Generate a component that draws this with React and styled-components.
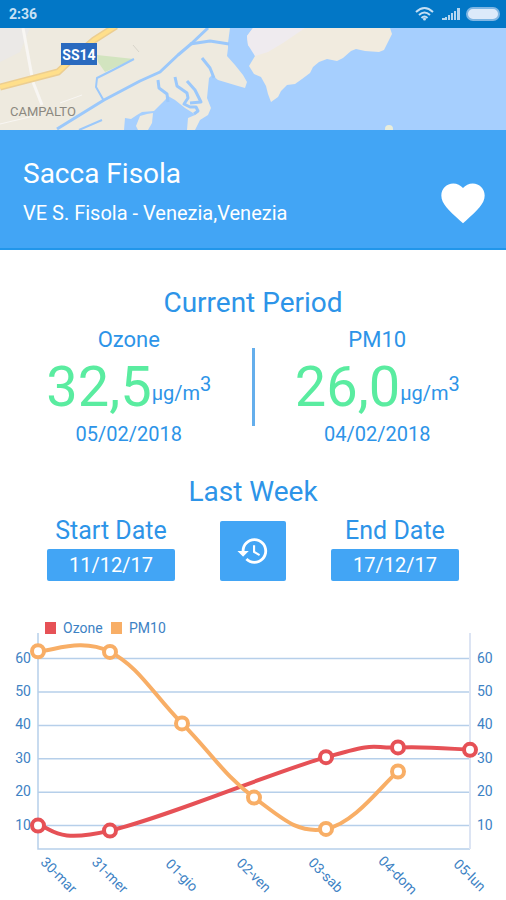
import React from "react";
import styled, { createGlobalStyle } from "styled-components";

const ozone = { name: "Ozone", value: "32,5", date: "05/02/2018" };
const pm10 = { name: "PM10", value: "26,0", date: "04/02/2018" };

const days = ["30-mar", "31-mer", "01-gio", "02-ven", "03-sab", "04-dom", "05-lun"];

const ticks = [60, 50, 40, 30, 20, 10];

const series = [
  {
    name: "Ozone",
    color: "#e65156",
    legendX: 45,
    points: [[0, 10], [1, 8.5], [4, 30.5], [5, 33.4], [6, 32.7]],
  },
  {
    name: "PM10",
    color: "#f8ae66",
    legendX: 111,
    points: [[0, 62.2], [1, 62], [2, 40.6], [3, 18.4], [4, 9], [5, 26.2]],
  },
];

const LEFT = 38;
const RIGHT = 470;
const BASE = 234;

const toX = (day) => LEFT + day * 72;
const toY = (value) => 244 - value * 3.34;

// cubic line where every control point follows its neighbours
const linePath = (points) => {
  const p = points.map(([day, value]) => [toX(day), toY(value)]);
  let d = `M${p[0][0]} ${p[0][1]}`;
  for (let i = 1; i < p.length; i++) {
    const before = p[Math.max(i - 2, 0)];
    const prev = p[i - 1];
    const cur = p[i];
    const next = p[Math.min(i + 1, p.length - 1)];
    const c1 = [0, 1].map((k) => prev[k] + (cur[k] - before[k]) * 0.2);
    const c2 = [0, 1].map((k) => cur[k] - (next[k] - prev[k]) * 0.2);
    d += ` C${c1.join(" ")} ${c2.join(" ")} ${cur.join(" ")}`;
  }
  return d;
};

const MapView = () => (
  <MapSvg viewBox="0 0 506 102" preserveAspectRatio="xMidYMid slice" role="img" aria-label="Map">
    <rect width="506" height="102" fill="#a6cffe" />
    <path
      fill="#eeeadf"
      d="M0 0H230L228 15V20L227 28L235 37L243 47L247 54L245 60L238 58L228 55L218 52L212 47L209 50L208 60L207 70L211 80L208 87L200 92L195 102H187L188 90L195 87L193 85L185 80L175 72L168 68L165 72L162 75L154 83L142 84L137 87L131 91L125 90L124 102H0Z"
    />
    <path fill="#eeeadf" d="M140 88L147 86L153 85L152 95L148 102H138L136 98L138 93Z" />
    <path
      fill="#f1ebdf"
      d="M253 0H390L392 6L388 14L384 22L379 24L365 23L356 21L351 23L343 30L337 33L327 31L319 34L313 39L310 45L302 51L295 56L287 57L281 63L278 69L271 74L268 66L266 58L261 49L254 46L249 38L255 28L253 22L248 17L247 8Z"
    />
    <path fill="#efebef" d="M253 0H305L283 15L268 24L255 28L248 17L247 8Z" />
    <path fill="#ebe9e7" d="M0 0H30L20 24L0 34Z" />
    <path fill="#d2e4bf" d="M97 27L134 31L105 44L98 34Z" />
    <g fill="none" stroke="#9bc8fb" strokeLinejoin="round">
      <path strokeWidth="3" d="M208 0L191 16L178 27L160 44L140 53L104 72L57 101" />
      <path strokeWidth="3" d="M190 16L210 13L229 16" />
      <path strokeWidth="2" d="M134 31L113 42L97 50L96 59L104 73M79 102L102 92" />
      <path strokeWidth="3" d="M158 52L159 60L167 66L168 74M202 30L210 40L214 50" />
      <path strokeWidth="3" d="M175 49L177 58L187 65L188 70L184 76L190 79H196L198 83L194 86M187 53L195 62L201 74L190 75" />
    </g>
    <path fill="none" stroke="#f8f6f3" strokeWidth="3" d="M23 0L33 54L42 77" />
    <path fill="none" stroke="#f8f6f3" strokeWidth="1" d="M0 96L38 87M60 75L82 67" />
    <path fill="none" stroke="#ecce91" strokeWidth="7" d="M0 59L58 44L72 31L94 12L116 -2" />
    <path fill="none" stroke="#ffdf8b" strokeWidth="4" d="M0 59L58 44L72 31L94 12L116 -2" />
    <path fill="none" stroke="#d7d4ca" strokeWidth="1" d="M133 17L139 24" />
    <circle cx="389" cy="101" r="4" fill="#e9edda" />
    <rect x="61" y="15" width="36" height="22" fill="#2a6abf" />
    <SignText x="79" y="32">SS14</SignText>
    <PlaceText x="10" y="88">CAMPALTO</PlaceText>
  </MapSvg>
);

const PeriodReading = ({ period }) => (
  <Period>
    <PeriodName>{period.name}</PeriodName>
    <Reading>
      <Value>{period.value}</Value>
      <Unit>
        µg/m<Cube>3</Cube>
      </Unit>
    </Reading>
    <PeriodDate>{period.date}</PeriodDate>
  </Period>
);

const Chart = () => (
  <ChartSvg viewBox="0 0 506 285" role="img" aria-label="Ozone and PM10, last week">
    {ticks.map((tick) => (
      <g key={tick}>
        <line x1={LEFT} x2={RIGHT} y1={toY(tick)} y2={toY(tick)} stroke="#b6cfea" strokeWidth="1.5" />
        <ChartText x="31" y={toY(tick) + 4} textAnchor="end">{tick}</ChartText>
        <ChartText x="477" y={toY(tick) + 4}>{tick}</ChartText>
      </g>
    ))}
    <path d={`M${LEFT} 18V${BASE}H${RIGHT}`} fill="none" stroke="#b6cfea" strokeWidth="1.5" />
    <path d={`M${RIGHT} 18V${BASE}`} stroke="#dce4f3" strokeWidth="2" />
    {series.map(({ name, color, legendX, points }) => (
      <g key={name}>
        <rect x={legendX} y="7" width="11" height="12" fill={color} />
        <ChartText x={legendX + 18} y="18">{name}</ChartText>
        <path d={linePath(points)} fill="none" stroke={color} strokeWidth="4" />
        {points.map(([day, value]) => (
          <circle key={day} cx={toX(day)} cy={toY(value)} r="6" fill="#fff" stroke={color} strokeWidth="4" />
        ))}
      </g>
    ))}
    {days.map((day, i) => (
      <g key={day} transform={`translate(${i === 0 ? 59 : toX(i)} 260) rotate(45)`}>
        <ChartText y="5" textAnchor="middle">{day}</ChartText>
      </g>
    ))}
  </ChartSvg>
);

const App = () => {
  return (
    <Wrapper>
      <GlobalStyle />
      <StatusBar>
        <Clock>2:36</Clock>
        <StatusIcons width="86" height="16" viewBox="0 0 86 16" aria-hidden="true">
          <g fill="none" stroke="#c4dff4" strokeWidth="2">
            <path d="M1 6Q9.5 -2 18 6" />
            <path d="M4 9Q9.5 4 15 9" />
            <path d="M6.5 12Q9.5 9 12.5 12" />
          </g>
          <circle cx="9.5" cy="13" r="1.5" fill="#c4dff4" />
          <path fill="#b4d6f0" d="M27 12h3v2h-3zM30 11h2v3h-2zM33 9h2v5h-2zM36 7h2v7h-2zM39 5h2v9h-2zM42 2h3v12h-3z" />
          <rect x="52" y="2" width="32" height="12" rx="6" fill="#dceafa" stroke="#7fb6e3" strokeWidth="2" />
        </StatusIcons>
      </StatusBar>
      <MapView />
      <Header>
        <div>
          <StationName>Sacca Fisola</StationName>
          <StationPlace>VE S. Fisola - Venezia,Venezia</StationPlace>
        </div>
        <HeartButton aria-label="Favourite">
          <svg width="52" height="52" viewBox="0 0 24 24" fill="#fff">
            <path d="M12 21.35l-1.45-1.32C5.4 15.36 2 12.28 2 8.5 2 5.42 4.42 3 7.5 3c1.74 0 3.41.81 4.5 2.09C13.09 3.81 14.76 3 16.5 3 19.58 3 22 5.42 22 8.5c0 3.78-3.4 6.86-8.55 11.54L12 21.35z" />
          </svg>
        </HeartButton>
      </Header>

      <Main>
        <SectionTitle>Current Period</SectionTitle>
        <PeriodRow>
          <PeriodReading period={ozone} />
          <Divider />
          <PeriodReading period={pm10} />
        </PeriodRow>

        <SectionTitle>Last Week</SectionTitle>
        <DateRow>
          <DateField>
            <DateLabel id="start-label">Start Date</DateLabel>
            <DateButton aria-labelledby="start-label start-date" id="start-date">11/12/17</DateButton>
          </DateField>
          <HistoryButton aria-label="Load history">
            <svg width="34" height="34" viewBox="0 0 24 24" fill="#fff">
              <path d="M13 3c-4.97 0-9 4.03-9 9H1l3.89 3.89.07.14L9 12H6c0-3.87 3.13-7 7-7s7 3.13 7 7-3.13 7-7 7c-1.93 0-3.68-.79-4.94-2.06l-1.42 1.42C8.27 19.99 10.51 21 13 21c4.97 0 9-4.03 9-9s-4.03-9-9-9zm-1 5v5l4.28 2.54.72-1.21-3.5-2.08V8H12z" />
            </svg>
          </HistoryButton>
          <DateField>
            <DateLabel id="end-label">End Date</DateLabel>
            <DateButton aria-labelledby="end-label end-date" id="end-date">17/12/17</DateButton>
          </DateField>
        </DateRow>
        <Chart />
      </Main>
    </Wrapper>
  );
};

export default App;

const GlobalStyle = createGlobalStyle`
  * {
    box-sizing: border-box;
  }
  body {
    margin: 0;
    background: #fff;
  }
  button {
    font-family: inherit;
    border: none;
    padding: 0;
    cursor: pointer;
  }
`;

const Wrapper = styled.div`
  font-family: Roboto, sans-serif;
  color: #2d94e8;
`;

// Top of the screen
const StatusBar = styled.div`
  display: flex;
  justify-content: space-between;
  align-items: center;
  height: 28px;
  padding: 0 5px 0 9px;
  background: #0277c6;
`;

const Clock = styled.span`
  font-size: 14px;
  font-weight: 700;
  color: #c8e2f5;
`;

const StatusIcons = styled.svg`
  display: block;
`;

const MapSvg = styled.svg`
  display: block;
  width: 100%;
  height: 102px;
`;

const SignText = styled.text`
  font-size: 14px;
  font-weight: 700;
  fill: #fff;
  text-anchor: middle;
`;

const PlaceText = styled.text`
  font-size: 13px;
  fill: #8b8880;
`;

const Header = styled.header`
  display: flex;
  justify-content: space-between;
  align-items: flex-end;
  padding: 28px 17px 19px 23px;
  background: #42a5f5;
  border-bottom: 2px solid #2196ea;
  color: #fff;
`;

const StationName = styled.h1`
  margin: 0 0 11px;
  font-size: 28px;
  font-weight: 400;
  line-height: 32px;
`;

const StationPlace = styled.p`
  margin: 0 0 4px;
  font-size: 20px;
  line-height: 24px;
`;

const HeartButton = styled.button`
  background: none;

  svg {
    display: block;
  }
`;

// Readings
const Main = styled.main`
  padding-top: 37px;
`;

const SectionTitle = styled.h2`
  margin: 0;
  font-size: 28px;
  font-weight: 400;
  line-height: 32px;
  text-align: center;
`;

const PeriodRow = styled.div`
  display: flex;
  justify-content: center;
  align-items: center;
  padding: 9px 6px 30px;
`;

const Period = styled.div`
  flex: 1;
  display: flex;
  flex-direction: column;
  align-items: center;
  gap: 7px;
`;

const Divider = styled.div`
  width: 3px;
  height: 78px;
  background: #64aeec;
`;

const PeriodName = styled.span`
  font-size: 22px;
  line-height: 24px;
`;

const PeriodDate = styled.span`
  font-size: 20px;
  line-height: 24px;
`;

const Reading = styled.div`
  display: flex;
  align-items: flex-end;
`;

const Value = styled.span`
  font-size: 56px;
  line-height: 56px;
  color: #5aeca0;
`;

const Unit = styled.span`
  font-size: 20px;
  line-height: 44px;
`;

const Cube = styled.sup`
  font-size: 20px;
  line-height: 0;
  vertical-align: 9px;
`;

// Date range
const DateRow = styled.div`
  display: flex;
  justify-content: center;
  align-items: flex-end;
  gap: 45px;
  padding: 10px 0 34px;
`;

const DateField = styled.div`
  display: flex;
  flex-direction: column;
  align-items: center;
  gap: 5px;
`;

const DateLabel = styled.span`
  font-size: 25px;
  line-height: 26px;
`;

const DateButton = styled.button`
  width: 128px;
  height: 32px;
  border-radius: 2px;
  background: #42a5f5;
  color: #fff;
  font-size: 20px;
`;

const HistoryButton = styled.button`
  display: flex;
  justify-content: center;
  align-items: center;
  width: 66px;
  height: 60px;
  border-radius: 2px;
  background: #42a5f5;
`;

// Chart
const ChartSvg = styled.svg`
  display: block;
  width: 100%;
`;

const ChartText = styled.text`
  font-size: 14px;
  fill: #3d82c4;
`;
